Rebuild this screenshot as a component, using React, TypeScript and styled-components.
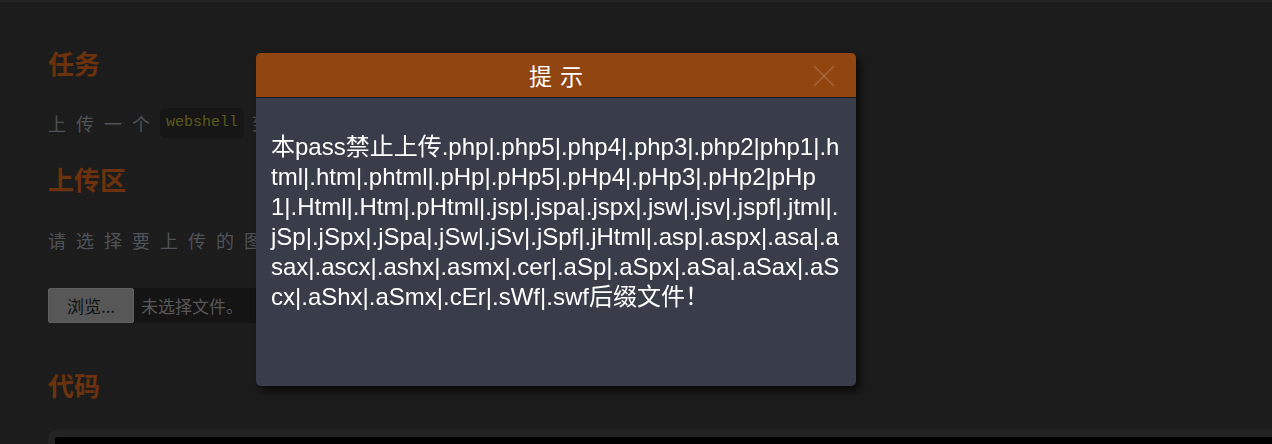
import React from "react";
import styled, { createGlobalStyle } from "styled-components";

const Global = createGlobalStyle`
  html, body { margin: 0; padding: 0; background: #1c1c1c; overflow: hidden; }
  body { font-family: "Liberation Sans", "Noto Sans CJK SC", sans-serif; }
`;

const Page = styled.div`
  width: 1272px;
  height: 444px;
  background: #1c1c1c;
  border-top: 2px solid #242424;
  box-sizing: border-box;
  overflow: hidden;
`;

const Main = styled.main`
  padding: 44px 0 0 48px;
  display: flex;
  flex-direction: column;
`;

const Heading = styled.h2<{ $gap: number }>`
  margin: ${(p) => p.$gap}px 0 0 0;
  height: 34px;
  font-size: 26px;
  line-height: 34px;
  font-weight: 700;
  color: #6c310d;
  font-family: "Noto Sans CJK SC", sans-serif;
`;

const Para = styled.p<{ $gap: number }>`
  margin: ${(p) => p.$gap}px 0 0 0;
  display: flex;
  align-items: center;
  white-space: nowrap;
  font-size: 18px;
  letter-spacing: 10px;
  color: #4e5358;
  font-family: "Noto Sans CJK SC", sans-serif;
`;

const Code = styled.code`
  display: inline-block;
  height: 30px;
  line-height: 30px;
  padding: 0 6px;
  margin-right: 8px;
  background: #161616;
  border-radius: 5px;
  font-family: "Liberation Mono", monospace;
  font-size: 15px;
  letter-spacing: 0;
  color: #5c5a1b;
`;

const FileRow = styled.div<{ $gap: number }>`
  margin-top: ${(p) => p.$gap}px;
  display: flex;
  align-items: stretch;
  height: 35px;
  background: #141414;
  width: 400px;
`;

const BrowseButton = styled.button`
  width: 86px;
  height: 35px;
  margin: 0;
  padding: 0;
  background: #575757;
  border: 1px solid #5f5f5f;
  border-radius: 2px;
  color: #101010;
  font-size: 17px;
  font-family: "Noto Sans CJK SC", sans-serif;
`;

const FileName = styled.span`
  padding-left: 7px;
  line-height: 35px;
  font-size: 17px;
  color: #575757;
  font-family: "Noto Sans CJK SC", sans-serif;
`;

const CodeBlock = styled.div<{ $gap: number }>`
  margin: ${(p) => p.$gap}px -40px 0 0;
  height: 40px;
  border: 7px solid #232323;
  border-bottom: none;
  border-radius: 9px 9px 0 0;
  background: #000;
`;

const Dialog = styled.div`
  position: fixed;
  left: 256px;
  top: 53px;
  width: 600px;
  height: 333px;
  border-radius: 5px;
  overflow: hidden;
  background: #393d49;
  box-shadow: 4px 5px 8px rgba(0, 0, 0, 0.7);
  display: flex;
  flex-direction: column;
`;

const DialogHeader = styled.div`
  position: relative;
  height: 44px;
  flex: none;
  background: #914511;
  border-bottom: 1px solid #1a1a1a;
  display: flex;
  align-items: center;
  justify-content: center;
`;

const Title = styled.span`
  font-size: 23px;
  letter-spacing: 8px;
  padding-left: 8px;
  color: #fff;
  font-family: "Noto Sans CJK SC", sans-serif;
`;

const Close = styled.button`
  position: absolute;
  right: 21px;
  top: 12px;
  width: 22px;
  height: 22px;
  padding: 0;
  border: 0;
  background: none;
  display: flex;
`;

const DialogBody = styled.div`
  padding: 34px 15px 0 15px;
  font-size: 24px;
  line-height: 30px;
  color: #fff;
  font-family: "Liberation Sans", "Noto Sans CJK SC", sans-serif;
`;

const Line = styled.span`
  display: block;
  white-space: nowrap;
`;

const lines = [
  "本pass禁止上传.php|.php5|.php4|.php3|.php2|php1|.h",
  "tml|.htm|.phtml|.pHp|.pHp5|.pHp4|.pHp3|.pHp2|pHp",
  "1|.Html|.Htm|.pHtml|.jsp|.jspa|.jspx|.jsw|.jsv|.jspf|.jtml|.",
  "jSp|.jSpx|.jSpa|.jSw|.jSv|.jSpf|.jHtml|.asp|.aspx|.asa|.a",
  "sax|.ascx|.ashx|.asmx|.cer|.aSp|.aSpx|.aSa|.aSax|.aS",
  "cx|.aShx|.aSmx|.cEr|.sWf|.swf后缀文件！",
];

export default function App() {
  return (
    <>
      <Global />
      <Page>
        <Main>
          <Heading $gap={0}>任务</Heading>
          <Para $gap={28}>
            上传一个<Code>webshell</Code>到服务器。
          </Para>
          <Heading $gap={24}>上传区</Heading>
          <Para $gap={31}>请选择要上传的图片：</Para>
          <FileRow $gap={35}>
            <BrowseButton>浏览...</BrowseButton>
            <FileName>未选择文件。</FileName>
          </FileRow>
          <Heading $gap={45}>代码</Heading>
          <CodeBlock $gap={28} />
        </Main>
        <Dialog>
          <DialogHeader>
            <Title>提示</Title>
            <Close aria-label="close">
              <svg width="22" height="22" viewBox="0 0 22 22">
                <path d="M1 1 L21 21 M21 1 L1 21" stroke="rgba(255,255,255,0.18)" strokeWidth="1.5" />
              </svg>
            </Close>
          </DialogHeader>
          <DialogBody>
            {lines.map((l) => (
              <Line key={l}>{l}</Line>
            ))}
          </DialogBody>
        </Dialog>
      </Page>
    </>
  );
}
